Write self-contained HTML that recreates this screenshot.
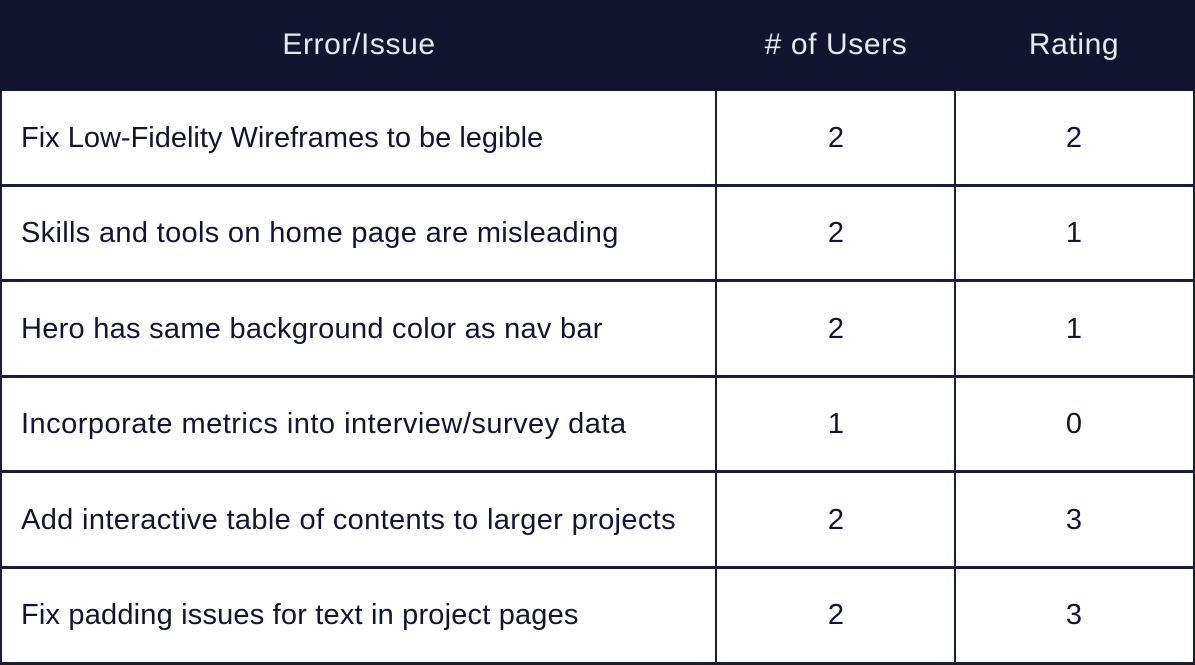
<!DOCTYPE html>
<html><head><style>
body{margin:0;width:1195px;height:665px;background:#fff;position:relative;overflow:hidden;font-family:"Liberation Sans",sans-serif;color:#11152f}
.hd{position:absolute;left:0;top:0;width:1195px;height:91px;background:#11152f}
.h{position:absolute;top:0;height:89px;line-height:89px;color:#e8e9ee;font-size:30px;letter-spacing:0.6px;text-align:center}
.v{position:absolute;background:#1a1d38;width:2px}
.hl{position:absolute;left:0;width:1195px;height:3px;background:#1a1d38}
.c{position:absolute;font-size:29px;line-height:30px;white-space:nowrap}
.n{text-align:center}
</style></head><body>
<div class="hd"></div>
<div class="h" style="left:0;width:718px">Error/Issue</div>
<div class="h" style="left:717px;width:238px">&#35; of Users</div>
<div class="h" style="left:955px;width:238px">Rating</div>
<div class="v" style="left:0;top:91px;height:574px"></div>
<div class="v" style="left:715px;top:91px;height:574px"></div>
<div class="v" style="left:954px;top:91px;height:574px"></div>
<div class="v" style="left:1193px;top:91px;height:574px"></div>
<div class="hl" style="top:184px"></div>
<div class="hl" style="top:279px"></div>
<div class="hl" style="top:375px"></div>
<div class="hl" style="top:470px"></div>
<div class="hl" style="top:566px"></div>
<div class="hl" style="top:662px"></div>

<div class="c" style="left:21px;top:123px">Fix Low-Fidelity Wireframes to be legible</div>
<div class="c n" style="left:717px;width:238px;top:123px">2</div>
<div class="c n" style="left:955px;width:238px;top:123px">2</div>

<div class="c" style="left:21px;top:218px;letter-spacing:0.32px">Skills and tools on home page are misleading</div>
<div class="c n" style="left:717px;width:238px;top:218px">2</div>
<div class="c n" style="left:955px;width:238px;top:218px">1</div>

<div class="c" style="left:21px;top:314px;letter-spacing:0.27px">Hero has same background color as nav bar</div>
<div class="c n" style="left:717px;width:238px;top:314px">2</div>
<div class="c n" style="left:955px;width:238px;top:314px">1</div>

<div class="c" style="left:21px;top:409px;letter-spacing:0.48px">Incorporate metrics into interview/survey data</div>
<div class="c n" style="left:717px;width:238px;top:409px">1</div>
<div class="c n" style="left:955px;width:238px;top:409px">0</div>

<div class="c" style="left:21px;top:505px;letter-spacing:0.35px">Add interactive table of contents to larger projects</div>
<div class="c n" style="left:717px;width:238px;top:505px">2</div>
<div class="c n" style="left:955px;width:238px;top:505px">3</div>

<div class="c" style="left:21px;top:600px;letter-spacing:0.18px">Fix padding issues for text in project pages</div>
<div class="c n" style="left:717px;width:238px;top:600px">2</div>
<div class="c n" style="left:955px;width:238px;top:600px">3</div>
</body></html>
